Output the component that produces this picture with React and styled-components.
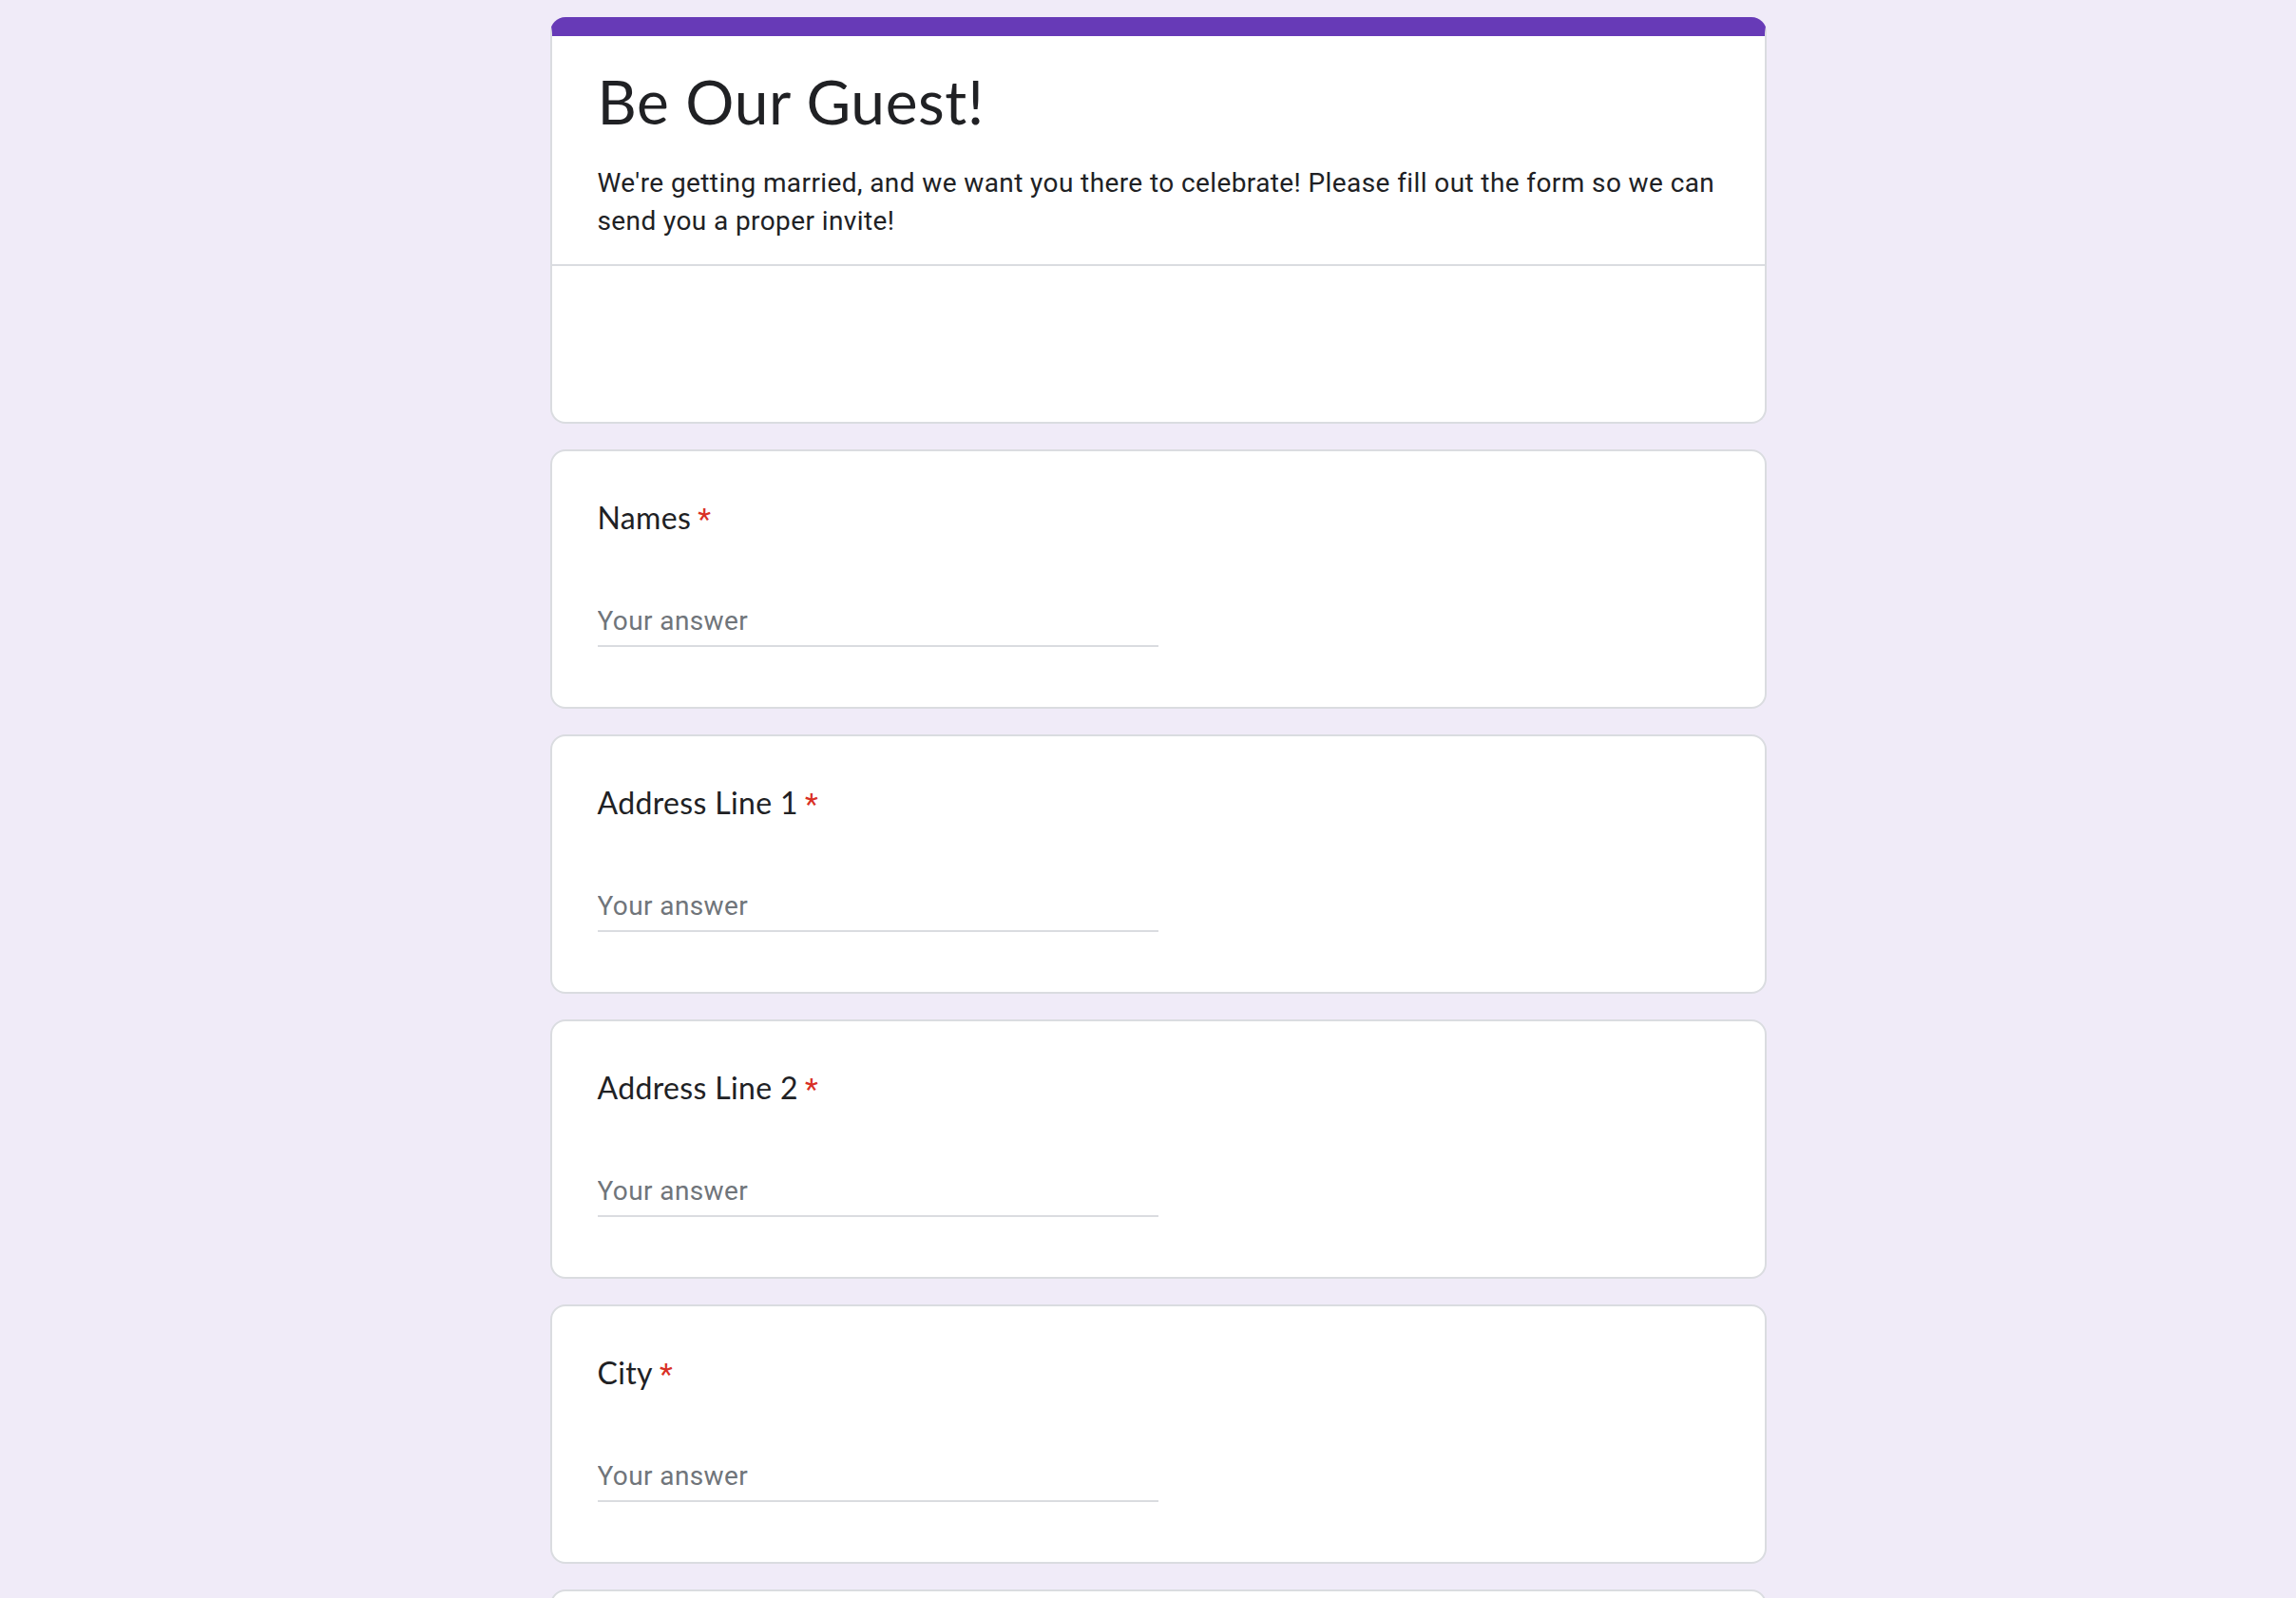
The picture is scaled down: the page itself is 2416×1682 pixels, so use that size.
import React from "react";
import styled, { createGlobalStyle } from "styled-components";

const GlobalStyle = createGlobalStyle`
  html, body {
    margin: 0;
    padding: 0;
    background: #f0ebf8;
  }
  body {
    font-family: Roboto, "Liberation Sans", Arial, sans-serif;
    color: #202124;
  }
  * { box-sizing: border-box; }
`;

const Page = styled.div`
  min-height: 100vh;
  background: #f0ebf8;
  padding: 18px 0 24px 21px;
  display: flex;
  justify-content: center;
`;

const Column = styled.main`
  width: 1280px;
  display: flex;
  flex-direction: column;
  gap: 27px;
`;

const HeaderCard = styled.section`
  background: #fff;
  border: 2px solid #dadce0;
  border-top: 20px solid #673ab7;
  border-radius: 16px;
  overflow: hidden;
`;

const HeaderText = styled.div`
  padding: 29px 48px 25px;
  border-bottom: 2px solid #dadce0;
`;

const FormTitle = styled.h1`
  margin: 0;
  font-family: Lato, "Open Sans", Roboto, sans-serif;
  font-weight: 400;
  font-size: 64px;
  line-height: 80px;
  letter-spacing: 0.6px;
  color: #202124;
`;

const FormDesc = styled.p`
  margin: 26px 0 0;
  font-family: Roboto, "Liberation Sans", sans-serif;
  font-size: 28px;
  line-height: 40px;
  letter-spacing: 0.4px;
  color: #202124;
`;

const HeaderFooter = styled.div`
  height: 164px;
`;

const QuestionCard = styled.section`
  background: #fff;
  border: 2px solid #dadce0;
  border-radius: 16px;
  padding: 46px 48px 63px;
  display: flex;
  flex-direction: column;
`;

const QuestionTitle = styled.div`
  height: 48px;
  font-family: Lato, "Open Sans", Roboto, sans-serif;
  font-size: 32px;
  line-height: 48px;
  letter-spacing: 0.35px;
  color: #202124;
  font-weight: 400;
`;

const Required = styled.span`
  font-family: Roboto, "Liberation Sans", sans-serif;
  line-height: 0;
  color: #d93025;
  padding-left: 7px;
`;

const AnswerInput = styled.input`
  margin-top: 64px;
  width: 50%;
  height: 48px;
  padding: 0 0 6px;
  border: none;
  border-bottom: 2px solid #dadce0;
  outline: none;
  background: transparent;
  font-family: Roboto, "Liberation Sans", sans-serif;
  font-size: 28px;
  line-height: 40px;
  letter-spacing: 0.4px;
  color: #202124;
  &::placeholder {
    color: #70757a;
    opacity: 1;
  }
`;

const questions = ["Names", "Address Line 1", "Address Line 2", "City", "State"];

function Question({ label }) {
  return (
    <QuestionCard>
      <QuestionTitle>
        {label}
        <Required>*</Required>
      </QuestionTitle>
      <AnswerInput type="text" placeholder="Your answer" aria-label={label} />
    </QuestionCard>
  );
}

export default function App() {
  return (
    <>
      <GlobalStyle />
      <Page>
        <Column>
          <HeaderCard>
            <HeaderText>
              <FormTitle>Be Our Guest!</FormTitle>
              <FormDesc>
                We're getting married, and we want you there to celebrate! Please fill out the form so we can send you a proper invite!
              </FormDesc>
            </HeaderText>
            <HeaderFooter />
          </HeaderCard>
          {questions.map((q) => (
            <Question key={q} label={q} />
          ))}
        </Column>
      </Page>
    </>
  );
}
